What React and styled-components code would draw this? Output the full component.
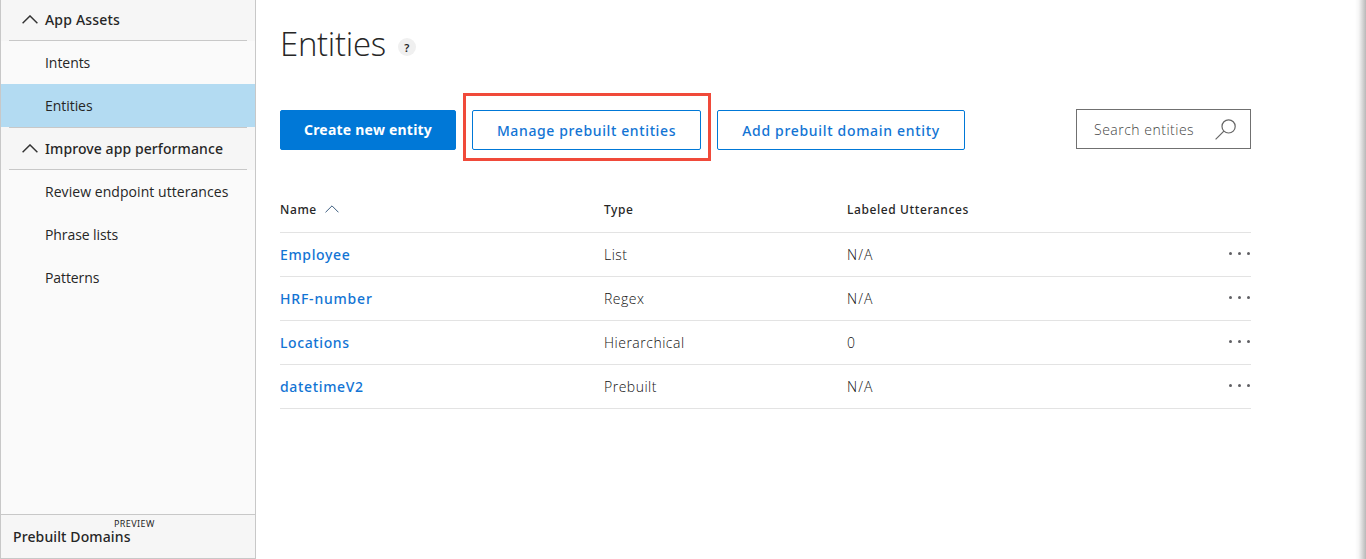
import React from "react";
import styled, { createGlobalStyle } from "styled-components";

const GlobalStyle = createGlobalStyle`
  *, *::before, *::after { box-sizing: border-box; }
  body {
    margin: 0;
    overflow: hidden;
    background: #fff;
    color: #262626;
    font-family: "Noto Sans", "Open Sans", sans-serif;
    font-size: 14px;
  }
`;

const Page = styled.div`
  display: flex;
  height: 559px;
  position: relative;
`;

const EdgeShadow = styled.div`
  position: absolute;
  top: 0;
  right: 0;
  bottom: 0;
  width: 11px;
  background: linear-gradient(to right, rgba(0, 0, 0, 0), rgba(0, 0, 0, 0.04) 35%, rgba(0, 0, 0, 0.28));
`;

const Sidebar = styled.nav`
  display: flex;
  flex-direction: column;
  width: 256px;
  flex: none;
  background: #fafafa;
  border: solid #c8c8c8;
  border-width: 0 1px 1px;
`;

const GroupHeader = styled.div`
  height: ${(p) => (p.$ruled ? 43 : 41)}px;
  background: #f6f6f6;
  padding: 0 8px;
`;

const GroupLabel = styled.div`
  display: flex;
  align-items: center;
  gap: 7px;
  height: 100%;
  padding: 0 0 1px 13px;
  border-bottom: 1px solid #c8c8c8;
  border-top: ${(p) => (p.$ruled ? "1px solid #c8c8c8" : "none")};
  font-weight: 500;
  letter-spacing: ${(p) => p.$spacing}px;
  white-space: nowrap;
`;

const NavItem = styled.a`
  display: flex;
  align-items: center;
  height: 43px;
  padding-left: 44px;
  font-family: "Open Sans", sans-serif;
  white-space: nowrap;
  background: ${(p) => (p.$active ? "#b3dbf2" : "transparent")};
  letter-spacing: ${(p) => p.$spacing}px;
`;

const SidebarFooter = styled.div`
  position: relative;
  height: 44px;
  margin-top: auto;
  padding: 12px 0 0 12px;
  background: #f6f6f6;
  border-top: 1px solid #c8c8c8;
  line-height: 20px;
  font-weight: 500;
  letter-spacing: 0.12px;
`;

const PreviewTag = styled.sup`
  position: absolute;
  top: 3px;
  left: 113px;
  font-size: 9px;
  line-height: 12px;
  font-weight: 400;
  letter-spacing: 0.4px;
`;

const Main = styled.main`
  width: 995px;
  padding-left: 24px;
`;

const TitleRow = styled.header`
  display: flex;
  align-items: center;
  gap: 12px;
  height: 93px;
  padding-bottom: 6px;
`;

const Title = styled.h1`
  margin: 0;
  font-family: "Open Sans", sans-serif;
  font-size: 33px;
  line-height: 44px;
  font-weight: 300;
  letter-spacing: -0.3px;
`;

const HelpBadge = styled.span`
  display: flex;
  align-items: center;
  justify-content: center;
  width: 18px;
  height: 18px;
  margin-top: 7px;
  border-radius: 50%;
  background: #f0f0f0;
  font-size: 11px;
  font-weight: 600;
`;

const Toolbar = styled.div`
  display: flex;
  align-items: flex-end;
  height: 68px;
  padding-bottom: 11px;
`;

const Button = styled.button`
  height: 40px;
  width: ${(p) => p.$width}px;
  flex: none;
  padding: 0;
  border: 1px solid #0078d7;
  border-radius: 2px;
  background: ${(p) => (p.$primary ? "#0078d7" : "#fff")};
  color: ${(p) => (p.$primary ? "#fff" : "#1274d4")};
  font-family: inherit;
  font-size: 14px;
  font-weight: ${(p) => (p.$primary ? 700 : 500)};
  line-height: 20px;
  padding-top: ${(p) => (p.$primary ? 0 : 2)}px;
  letter-spacing: ${(p) => (p.$primary ? 0.22 : p.$spacing)}px;
  white-space: nowrap;
`;

const Highlight = styled.div`
  display: flex;
  align-items: flex-end;
  width: 248px;
  height: 68px;
  margin: 0 6px -11px 7px;
  padding: 0 0 8px 6px;
  border: 3px solid #f04a3a;
`;

const SearchBox = styled.label`
  display: flex;
  align-items: center;
  justify-content: space-between;
  width: 175px;
  height: 40px;
  margin: 0 0 1px auto;
  padding: 0 14px 0 17px;
  border: 1px solid #707070;
  color: #444;
  font-family: "Open Sans", sans-serif;
  font-weight: 300;
  letter-spacing: 0.5px;
`;

const Table = styled.div`
  margin-top: 28px;
`;

const Row = styled.div`
  display: grid;
  grid-template-columns: 324px 243px 1fr auto;
  align-items: center;
  height: 44px;
  border-bottom: 1px solid #e3e3e3;
`;

const HeadRow = styled(Row)`
  font-size: 12px;
  font-weight: 500;
  letter-spacing: 0.6px;
  padding-bottom: 3px;
`;

const HeadCell = styled.div`
  display: flex;
  align-items: center;
  gap: 8px;
`;

const NameLink = styled.a`
  color: #1274d4;
  font-weight: 500;
  letter-spacing: ${(p) => p.$spacing}px;
`;

const Cell = styled.div`
  font-family: "Open Sans", sans-serif;
  font-weight: 300;
  color: #111;
  letter-spacing: ${(p) => (p.$wide ? 1.1 : 0.5)}px;
`;

const Dots = styled.div`
  display: flex;
  gap: 6px;
  margin-right: 1.5px;
  padding-bottom: 2px;
  &::before, &::after { content: ""; }
  &::before, &::after, i {
    width: 3px;
    height: 3px;
    border-radius: 50%;
    background: #606064;
  }
  i { display: block; }
`;

const Chevron = ({ width = 16, height = 9, stroke = 1.4, color = "#333" }) => (
  <svg width={width} height={height} viewBox="0 0 16 9" fill="none" stroke={color} strokeWidth={stroke}>
    <path d="M0.6 8.3 8 0.9l7.4 7.4" />
  </svg>
);

const SearchIcon = () => (
  <svg width="21" height="21" viewBox="0 0 21 21" fill="none" stroke="#666" strokeWidth="1.2">
    <circle cx="13.6" cy="7.4" r="6.6" />
    <path d="M8.9 12.1 0.6 20.4" />
  </svg>
);

const groups = [
  {
    label: "App Assets",
    spacing: 0.18,
    items: [
      { label: "Intents", spacing: -0.05 },
      { label: "Entities", active: true, spacing: -0.05 },
    ],
  },
  {
    label: "Improve app performance",
    spacing: 0.09,
    ruled: true,
    items: [
      { label: "Review endpoint utterances", spacing: 0.06 },
      { label: "Phrase lists", spacing: -0.08 },
      { label: "Patterns", spacing: -0.1 },
    ],
  },
];

const entities = [
  { name: "Employee", type: "List", count: "N/A", spacing: 0.65 },
  { name: "HRF-number", type: "Regex", count: "N/A", spacing: 0.8 },
  { name: "Locations", type: "Hierarchical", count: "0", spacing: 0.6 },
  { name: "datetimeV2", type: "Prebuilt", count: "N/A", spacing: 0.65 },
];

export default function App() {
  return (
    <Page>
      <GlobalStyle />
      <Sidebar>
        {groups.map((g) => (
          <React.Fragment key={g.label}>
            <GroupHeader $ruled={g.ruled}>
              <GroupLabel $ruled={g.ruled} $spacing={g.spacing}>
                <Chevron />
                {g.label}
              </GroupLabel>
            </GroupHeader>
            {g.items.map((i) => (
              <NavItem key={i.label} $active={i.active} $spacing={i.spacing}>
                {i.label}
              </NavItem>
            ))}
          </React.Fragment>
        ))}
        <SidebarFooter>
          Prebuilt Domains
          <PreviewTag>PREVIEW</PreviewTag>
        </SidebarFooter>
      </Sidebar>
      <Main>
        <TitleRow>
          <Title>Entities</Title>
          <HelpBadge>?</HelpBadge>
        </TitleRow>
        <Toolbar>
          <Button $primary $width={176}>Create new entity</Button>
          <Highlight>
            <Button $width={229} $spacing={0.62}>Manage prebuilt entities</Button>
          </Highlight>
          <Button $width={248} $spacing={0.68}>Add prebuilt domain entity</Button>
          <SearchBox>
            Search entities
            <SearchIcon />
          </SearchBox>
        </Toolbar>
        <Table>
          <HeadRow>
            <HeadCell>
              Name
              <Chevron width={14} height={8} stroke={1.1} color="#33557a" />
            </HeadCell>
            <HeadCell>Type</HeadCell>
            <HeadCell>Labeled Utterances</HeadCell>
          </HeadRow>
          {entities.map((e) => (
            <Row key={e.name}>
              <NameLink $spacing={e.spacing}>{e.name}</NameLink>
              <Cell>{e.type}</Cell>
              <Cell $wide>{e.count}</Cell>
              <Dots><i /></Dots>
            </Row>
          ))}
        </Table>
      </Main>
      <EdgeShadow />
    </Page>
  );
}
